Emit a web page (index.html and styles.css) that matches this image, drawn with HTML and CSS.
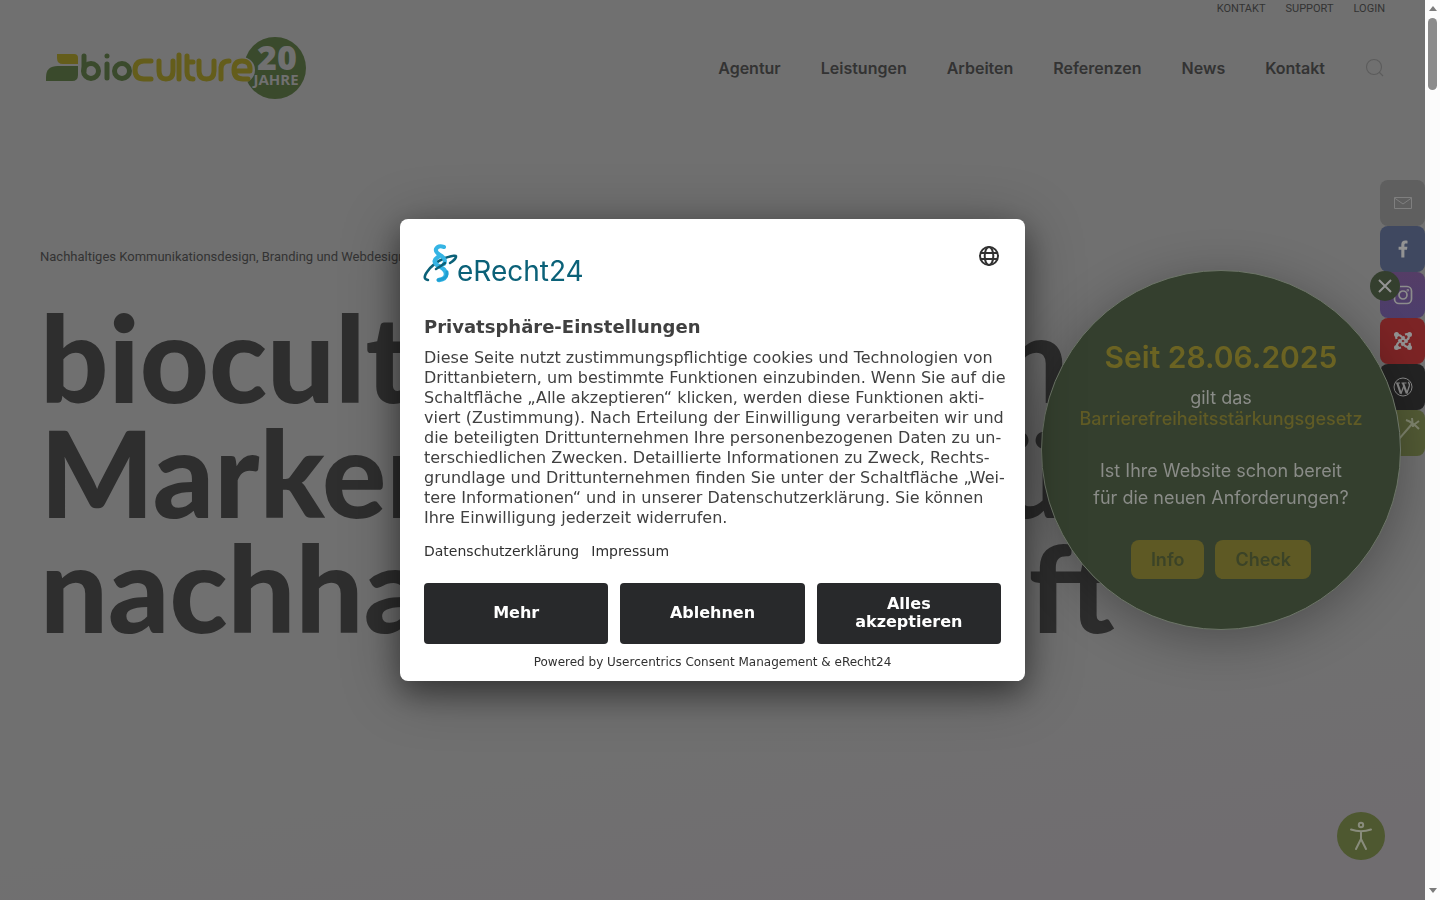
FILE: index.html
```html
<!DOCTYPE html>
<html lang="de">
<head>
    <meta charset="UTF-8">
    <meta name="viewport" content="width=device-width, initial-scale=1.0">
    <title>bioculture</title>
    <link rel="stylesheet" href="styles.css">
</head>
<body>

<div class="page">
    <nav class="topbar">
        <a href="#">KONTAKT</a>
        <a href="#">SUPPORT</a>
        <a href="#">LOGIN</a>
    </nav>

    <header class="navbar">
        <a href="#" class="logo" aria-label="bioculture">
            <svg width="262" height="64" viewBox="0 0 262 64">
                <path d="M12 18h17q4 0 4 4v6H18q-6 0-6-6z" fill="#645d1b"/>
                <path d="M1 45v-4q0-11 12-11h20v9q0 6-6 6z" fill="#3a4a2c"/>
                <circle cx="230" cy="32" r="31" fill="#3a4a2c"/>
                <circle cx="197" cy="34" r="13" fill="#707070"/>
                <g fill="none" stroke-width="5" stroke-linecap="round" stroke-linejoin="round">
                    <g stroke="#3a4a2c">
                        <path d="M39 20v15"/><circle cx="46" cy="35" r="7.5"/>
                        <path d="M62 28v14M62 20v0"/><circle cx="77" cy="35" r="7.500"/>
                    </g>
                    <g stroke="#645d1b">
                        <path d="M106 25h-7q-9 0-9 9t9 9h7"/>
                        <path d="M114 25v10q0 8 7 8t7-8V25"/>
                        <path d="M134 19v24"/>
                        <path d="M142 20v16q0 7 6 7M142 26h6"/>
                        <path d="M154 25v10q0 8 7.500 8t7.500-8V25"/>
                        <path d="M176 43V33q0-8 8-8"/>
                        <path d="M190 35h15q1-10-8-10-8 0-8 9t9 9h5"/>
                    </g>
                </g>
                <text x="232" y="34" class="logo-years">20</text>
                <text x="231" y="49" class="logo-word">JAHRE</text>
            </svg>
        </a>
        <nav class="menu">
            <a href="#">Agentur</a>
            <a href="#">Leistungen</a>
            <a href="#">Arbeiten</a>
            <a href="#">Referenzen</a>
            <a href="#">News</a>
            <a href="#">Kontakt</a>
            <a href="#" class="search" aria-label="Suche">
                <svg width="20" height="20" viewBox="0 0 20 20" fill="none" stroke="#5c5c5c" stroke-width="1.1"><circle cx="9" cy="9" r="7.5"/><path d="M14 14l4 4"/></svg>
            </a>
        </nav>
    </header>

    <main class="hero">
        <p class="subline">Nachhaltiges Kommunikationsdesign, Branding und Webdesign</p>
        <h1>bioculture schaffen<br>Markenstrategie für<br>nachhaltige Zukunft</h1>
    </main>
</div>

<div class="social">
    <a href="#" class="mail" aria-label="E-Mail">
        <svg width="20" height="20" viewBox="0 0 20 20" fill="none" stroke="#7f7f7f"><path d="M1.5 4.500h17v11h-17zM1.500 5l8.500 6 8.500-6"/></svg>
    </a>
    <a href="#" class="facebook" aria-label="Facebook">
        <svg width="20" height="20" viewBox="0 0 20 20" fill="#939393"><path d="M11.400 18.500v-7.700h2.600l.4-3h-3V6c0-.9.300-1.500 1.500-1.500h1.600V1.800C14.200 1.700 13.300 1.600 12.200 1.600c-2.300 0-3.900 1.400-3.900 4v2.200H5.600v3h2.700v7.700z"/></svg>
    </a>
    <a href="#" class="instagram" aria-label="Instagram">
        <svg width="20" height="20" viewBox="0 0 20 20" fill="none" stroke="#8c8c8c" stroke-width="1.700"><rect x="1.500" y="1.500" width="17" height="17" rx="4.500"/><circle cx="10" cy="10" r="4"/><circle cx="14.800" cy="5.200" r=".4"/></svg>
    </a>
    <a href="#" class="joomla" aria-label="Joomla">
        <svg width="20" height="20" viewBox="0 0 20 20" fill="none" stroke="#939393" stroke-width="2.200"><path d="M3.500 8q-1-3.500 1.500-4 2-.2 4 2l5.500 5.500M12 3.500q3.500-1 4 1.500 .2 2-2 4l-5.500 5.500M16.500 12q1 3.500-1.500 4-2 .2-4-2L5.500 8.500M8 16.500q-3.500 1-4-1.500-.2-2 2-4L11.500 5.500"/><g fill="#939393" stroke="none"><circle cx="3.500" cy="3.500" r="2.500"/><circle cx="16.500" cy="3.500" r="2.500"/><circle cx="3.500" cy="16.500" r="2.500"/><circle cx="16.500" cy="16.500" r="2.500"/></g></svg>
    </a>
    <a href="#" class="wordpress" aria-label="WordPress">
        <svg width="20" height="20" viewBox="0 0 20 20" fill="none" stroke="#8a8a8a"><circle cx="10" cy="10" r="9"/><path d="M2.500 6h4.500M8.500 6h5" stroke-width="1.200"/><path d="M4.200 6l3.600 10.500M10 6l3.800 10.500" stroke-width="2.200"/><path d="M7.800 17l3-8M13.800 16.500l2.500-7.500q.5-2-1-4" stroke-width="1.300"/></svg>
    </a>
    <a href="#" class="tools" aria-label="Werkzeuge">
        <svg width="45" height="45" viewBox="0 0 45 45" fill="none" stroke="#81866f" stroke-width="2"><path d="M19 28L32 13M26 9q6 2 13 9M32 7l1 9M39 10l-7 5"/></svg>
    </a>
</div>

<aside class="notice">
    <button class="notice-close" aria-label="Schließen">
        <svg width="14" height="14" viewBox="0 0 14 14" fill="none" stroke="#939393" stroke-width="2"><path d="M1 1l12 12M13 1L1 13"/></svg>
    </button>
    <h2>Seit 28.06.2025</h2>
    <p class="law">gilt das<br><span>Barrierefreiheitsstärkungsgesetz</span></p>
    <p class="question">Ist Ihre Website schon bereit<br>für die neuen Anforderungen?</p>
    <div class="notice-buttons">
        <button>Info</button>
        <button>Check</button>
    </div>
</aside>

<button class="accessibility" aria-label="Barrierefreiheit">
    <svg width="24" height="32" viewBox="0 0 24 32" fill="none" stroke="#898c7c" stroke-width="2" stroke-linecap="round"><circle cx="12" cy="5" r="2.200"/><path d="M2 9.500q10 3.500 20 0M12 11.500V19L7 29M12 19l5 10"/></svg>
</button>

<div class="consent-wrap">
    <div class="consent" role="dialog" aria-labelledby="consent-title">
        <div class="consent-head">
            <svg width="162" height="40" viewBox="0 0 162 40" role="img" aria-label="eRecht24">
                <g fill="none" stroke-linecap="round">
                    <path d="M4 36q-6-1-1-8Q9 19 21 14q12-4 11-1-1 3-6 6" stroke="#0b6178" stroke-width="2.500"/>
                    <path d="M20 3q-6-2-8 2-1 3 4 6 7 4 4 9" stroke="#35b4e4" stroke-width="4"/>
                    <path d="M14 13q-6 4-1 8 9 4 9 9 0 5-7 6" stroke="#35b4e4" stroke-width="4.500"/>
                    <path d="M21 19q-4 3-9 6" stroke="#0b6178" stroke-width="2.500"/>
                    <path d="M23 28q1 7-9 8" stroke="#1e9fd2" stroke-width="3"/>
                </g>
                <text x="33" y="37" class="erecht">eRecht24</text>
            </svg>
            <button class="language" aria-label="Sprache">
                <svg width="24" height="24" viewBox="0 0 24 24" fill="none" stroke="#303030" stroke-width="2"><circle cx="12" cy="12" r="9"/><ellipse cx="12" cy="12" rx="4.300" ry="9"/><path d="M4 9h16M4 15h16"/></svg>
            </button>
        </div>
        <h2 id="consent-title">Privatsphäre-Einstellungen</h2>
        <p class="consent-text">Diese Seite nutzt zustimmungspflichtige cookies und Technologien von Drittanbietern, um bestimmte Funktionen einzubinden. Wenn Sie auf die Schaltfläche „Alle akzeptieren“ klicken, werden diese Funktionen akti&shy;viert (Zustimmung). Nach Erteilung der Einwilligung verarbeiten wir und die beteiligten Drittunternehmen Ihre personenbezogenen Daten zu un&shy;terschiedlichen Zwecken. Detaillierte Informationen zu Zweck, Rechts&shy;grundlage und Drittunternehmen finden Sie unter der Schaltfläche „Wei&shy;tere Informationen“ und in unserer Datenschutzerklärung. Sie können Ihre Einwilligung jederzeit widerrufen.</p>
        <div class="consent-links">
            <a href="#">Datenschutzerklärung</a>
            <a href="#">Impressum</a>
        </div>
        <div class="consent-buttons">
            <button>Mehr</button>
            <button>Ablehnen</button>
            <button>Alles akzeptieren</button>
        </div>
        <p class="powered">Powered by <a href="#">Usercentrics Consent Management</a> &amp; <a href="#">eRecht24</a></p>
    </div>
</div>

<div class="scrollbar">
    <span class="arrow-up"></span>
    <span class="thumb"></span>
    <span class="arrow-down"></span>
</div>

</body>
</html>
```
FILE: styles.css
```css
* {
    box-sizing: border-box;
}
body {
    margin: 0;
    font-family: Inter, sans-serif;
    background-color: #707070;
    color: #333;
}
a {
    color: inherit;
    text-decoration: none;
}
button {
    border: none;
    padding: 0;
    font-family: inherit;
    cursor: pointer;
}
svg {
    display: block;
    overflow: visible;
}
h1, h2, p {
    margin: 0;
}
.page {
    height: 100vh;
    overflow: hidden;
    padding: 0 55px 0 40px;
    background: linear-gradient(170deg, #707070 75%, #706d70 92%);
}

/* header */
.topbar {
    display: flex;
    justify-content: flex-end;
    gap: 20px;
    height: 18px;
    font: 400 11px/18px Roboto, sans-serif;
}
.navbar {
    display: flex;
    justify-content: space-between;
    align-items: center;
    height: 100px;
    padding-left: 5px;
}
.menu {
    display: flex;
    align-items: center;
    gap: 40px;
    font-size: 16px;
    font-weight: 600;
}
.logo-years {
    font: 800 34px "Open Sans", sans-serif;
    text-anchor: middle;
    fill: #707070;
}
.logo-word {
    font: 700 15px "Open Sans", sans-serif;
    text-anchor: middle;
    fill: #707070;
}

/* hero */
.hero {
    padding-top: 129px;
}
.subline {
    font: 400 13px/20px Roboto, sans-serif;
}
h1 {
    margin-top: 33px;
    font: 900 120px/115px Lato, sans-serif;
    color: #2e2e2e;
    white-space: nowrap;
}

/* social buttons */
.social {
    position: fixed;
    top: 180px;
    right: 15px;
    display: flex;
    flex-direction: column;
}
.social a {
    display: flex;
    align-items: center;
    justify-content: center;
    width: 45px;
    height: 46px;
    border-radius: 8px;
}
.mail {
    background: #5f5f5f;
}
.facebook {
    background: #3f4860;
}
.instagram {
    background: linear-gradient(#553d66, #4c3e6c);
}
.joomla {
    background: #7c2425;
}
.wordpress {
    background: #232323;
}
.tools {
    background: #535b35;
}

/* round notice */
.notice {
    position: fixed;
    top: 270px;
    right: 39px;
    display: flex;
    flex-direction: column;
    align-items: center;
    width: 360px;
    height: 360px;
    padding-top: 66px;
    border: 1px solid #6d7568;
    border-radius: 50%;
    background: #343f2e;
    box-shadow: 0 10px 50px rgba(0, 0, 0, 0.3);
    color: #8a8c88;
    text-align: center;
    font-size: 18px;
}
.notice h2 {
    font-size: 30px;
    font-weight: 600;
    line-height: 40px;
    color: #6b6322;
}
.law {
    margin-top: 10px;
    line-height: 21px;
}
.law span {
    color: #605b25;
    font-weight: 500;
}
.question {
    margin-top: 28px;
    line-height: 27px;
}
.notice-buttons {
    display: flex;
    gap: 11px;
    margin-top: 29px;
}
.notice-buttons button {
    height: 39px;
    padding: 0 20px;
    border-radius: 8px;
    background: #5e5924;
    color: #3b4327;
    font-size: 18px;
    font-weight: 600;
}
.notice-close {
    position: absolute;
    top: 0;
    right: 0;
    display: flex;
    align-items: center;
    justify-content: center;
    width: 30px;
    height: 30px;
    border-radius: 50%;
    background: #343f2e;
}
.accessibility {
    position: fixed;
    right: 55px;
    bottom: 40px;
    display: flex;
    align-items: center;
    justify-content: center;
    width: 48px;
    height: 48px;
    border-radius: 50%;
    background: #4e5830;
}

/* consent dialog */
.consent-wrap {
    position: fixed;
    inset: 0 15px 0 0;
    display: flex;
    align-items: center;
    justify-content: center;
}
.consent {
    width: 625px;
    padding: 25px 24px 11px;
    border-radius: 8px;
    background: #fff;
    box-shadow: 0 8px 60px rgba(0, 0, 0, 0.3), 0 12px 30px rgba(0, 0, 0, 0.4);
    font-family: "DejaVu Sans", sans-serif;
    color: #303030;
}
.consent-head {
    display: flex;
    justify-content: space-between;
    align-items: flex-start;
    height: 70px;
}
.erecht {
    font: 400 28px Inter, sans-serif;
    fill: #0b6178;
}
.language {
    background: none;
}
.consent h2 {
    font-size: 18px;
    line-height: 26px;
    color: #404040;
}
.consent-text {
    margin: 8px -8px 0 0;
    font-size: 16px;
    line-height: 20px;
    color: #404040;
}
.consent-links {
    display: flex;
    gap: 12px;
    margin-top: 13px;
    font-size: 14px;
    line-height: 20px;
}
.consent-buttons {
    display: grid;
    grid-template-columns: repeat(3, 1fr);
    gap: 12px;
    margin-top: 22px;
}
.consent-buttons button {
    height: 61px;
    padding: 0 24px 2px;
    border-radius: 4px;
    background: #28292b;
    color: #fff;
    font-size: 16px;
    font-weight: 700;
    line-height: 18px;
}
.powered {
    margin-top: 10px;
    text-align: center;
    font-size: 12px;
    line-height: 16px;
}

/* scrollbar */
.scrollbar {
    position: fixed;
    inset: 0 0 0 auto;
    display: flex;
    flex-direction: column;
    align-items: center;
    width: 15px;
    padding: 6px 0 7px;
    background: #fcfcfc;
}
.arrow-up, .arrow-down {
    border: 4px solid transparent;
}
.arrow-up {
    border-top: none;
    border-bottom: 5px solid #7b7b7b;
}
.arrow-down {
    margin-top: auto;
    border-bottom: none;
    border-top: 5px solid #7b7b7b;
}
.thumb {
    width: 9px;
    height: 72px;
    margin-top: 7px;
    border-radius: 5px;
    background: #8b8b8b;
}
```
